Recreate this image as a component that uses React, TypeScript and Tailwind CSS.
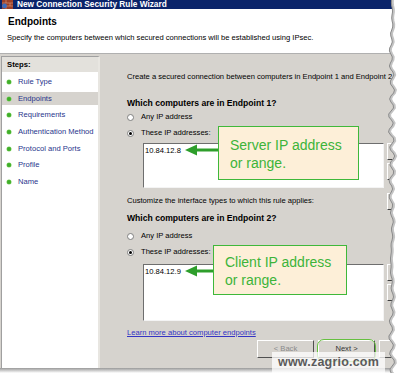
import React from "react";

function Radio({ checked }: { checked?: boolean }) {
  return (
    <span className="w-[7px] h-[7px] rounded-full border border-[#7f7f7f] bg-white shrink-0 flex items-center justify-center">
      {checked && <span className="block w-[3px] h-[3px] rounded-full bg-black" />}
    </span>
  );
}

function Bullet() {
  return (
    <span className="block w-[4px] h-[4px] rounded-full bg-[#3fae2a] shadow-[0_0_0_0.5px_#7ccf5e] shrink-0" />
  );
}

function SideButton() {
  return (
    <div className="w-[50px] h-[17px] bg-[#d6d3ce] border border-t-white border-l-white border-b-[#404040] border-r-[#404040]" />
  );
}

function TitleIcon() {
  return (
    <svg width="13" height="9" viewBox="0 0 13 9" className="shrink-0 ml-[1px]">
      <rect x="1" y="0" width="11" height="9" fill="#9c3f28" />
      <path d="M1 3h11M1 6h11M5 0v3M9 3v3M5 6v3" stroke="#d9a080" strokeWidth="0.6" />
      <circle cx="3.5" cy="6" r="2.4" fill="#3b6cc0" />
    </svg>
  );
}

function Arrow({ tipX, y, endX }: { tipX: number; y: number; endX: number }) {
  return (
    <svg className="absolute left-0 top-0 pointer-events-none" width="400" height="373">
      <line x1={tipX + 10} y1={y} x2={endX} y2={y} stroke="#2e9e2b" strokeWidth="3" />
      <polygon points={`${tipX},${y} ${tipX + 12},${y - 5.5} ${tipX + 12},${y + 5.5}`} fill="#2e9e2b" />
    </svg>
  );
}

function TornEdge() {
  const pts: string[] = [];
  for (let y = 0; y <= 375; y += 3) {
    const x = 391.5 + Math.sin(y * 1.7) * 1.4 + Math.sin(y * 0.37) * 1.1 + Math.sin(y * 0.09) * 0.8;
    pts.push(`${x.toFixed(1)},${y}`);
  }
  const d = `M${pts.join(" L")} L400,375 L400,0 Z`;
  const line = `M${pts.join(" L")}`;
  return (
    <svg className="absolute left-0 top-0 pointer-events-none" width="400" height="373">
      <path d={d} fill="#ffffff" />
      <path d={line} fill="none" stroke="#c4c4c4" strokeWidth="2.4" transform="translate(1.2,0)" />
      <path d={line} fill="none" stroke="#8a8a8a" strokeWidth="1" />
    </svg>
  );
}

export default function App() {
  const steps = [
    "Rule Type",
    "Endpoints",
    "Requirements",
    "Authentication Method",
    "Protocol and Ports",
    "Profile",
    "Name",
  ];
  return (
    <div className="relative w-[400px] h-[373px] overflow-hidden bg-white font-['Liberation_Sans',Arial,sans-serif] text-black">
      <div className="flex flex-col w-[400px] h-[368px]">
        {/* Title bar */}
        <div className="h-[9px] shrink-0 bg-[#0a246a] flex items-start overflow-hidden">
          <TitleIcon />
          <span className="ml-[3px] text-[8.3px] leading-[8px] font-bold text-white whitespace-nowrap">
            New Connection Security Rule Wizard
          </span>
        </div>
        {/* Header */}
        <div className="h-[45px] shrink-0 bg-white border-b border-[#b0b0b0] pl-[8px] pt-[7px]">
          <div className="h-[12px] leading-[12px] text-[10px] font-bold">Endpoints</div>
          <div className="mt-[5px] -ml-[1px] h-[10px] leading-[10px] text-[7.6px] whitespace-nowrap">
            Specify the computers between which secured connections will be established using IPsec.
          </div>
        </div>
        {/* Body */}
        <div className="flex-1 min-h-0 flex bg-[#d6d3ce]">
          {/* Steps panel */}
          <div className="w-[99px] ml-[1px] mt-[2px] shrink-0 bg-white border-l border-t border-[#a0a0a0] border-r-[2px] border-r-[#e8e6e1] flex flex-col">
            <div className="h-[15px] leading-[15px] bg-[#e3e1dc] pl-[5px] text-[7.7px] font-bold">Steps:</div>
            <div className="mt-[2px] flex flex-col">
              {steps.map((s) => (
                <div key={s} className="h-[16.6px] flex items-center">
                  <div
                    className={
                      s === "Endpoints"
                        ? "w-full h-[13px] flex items-center bg-[#d6d3ce]"
                        : "w-full h-[13px] flex items-center"
                    }
                  >
                    <span className="block ml-[5px]">
                      <Bullet />
                    </span>
                    <span className="ml-[7px] text-[7.6px] leading-[10px] text-[#27358c] whitespace-nowrap">{s}</span>
                  </div>
                </div>
              ))}
            </div>
          </div>
          {/* Content */}
          <div className="pl-[27px] flex flex-col text-[7.6px] whitespace-nowrap">
            <div className="mt-[18px] h-[10px] leading-[10px]">
              Create a secured connection between computers in Endpoint 1 and Endpoint 2.
            </div>
            <div className="mt-[16px] h-[11px] leading-[11px] text-[8.6px] font-bold">Which computers are in Endpoint 1?</div>
            <div className="mt-[3px] h-[10px] flex items-center">
              <Radio />
              <span className="ml-[7px] leading-[10px]">Any IP address</span>
            </div>
            <div className="mt-[6px] h-[10px] flex items-center">
              <Radio checked />
              <span className="ml-[7px] leading-[10px]">These IP addresses:</span>
            </div>
            <div className="mt-[5px] ml-[16px] flex gap-[3px]">
              <div className="w-[241px] h-[45px] bg-white border border-t-[#6e6e6e] border-l-[#6e6e6e] border-b-[#f4f4f4] border-r-[#f4f4f4] pl-[1px] pt-[1.5px] leading-[10px]">
                10.84.12.8
              </div>
              <div className="flex flex-col gap-[3px]">
                <SideButton />
                <SideButton />
              </div>
            </div>
            <div className="mt-[8px] h-[10px] flex items-center">
              <span className="leading-[10px] w-[260px]">Customize the interface types to which this rule applies:</span>
              <SideButton />
            </div>
            <div className="mt-[7px] h-[11px] leading-[11px] text-[8.6px] font-bold">Which computers are in Endpoint 2?</div>
            <div className="mt-[7px] h-[10px] flex items-center">
              <Radio />
              <span className="ml-[7px] leading-[10px]">Any IP address</span>
            </div>
            <div className="mt-[6px] h-[10px] flex items-center">
              <Radio checked />
              <span className="ml-[7px] leading-[10px]">These IP addresses:</span>
            </div>
            <div className="mt-[7px] ml-[16px] flex gap-[3px]">
              <div className="w-[241px] h-[57px] bg-white border border-t-[#6e6e6e] border-l-[#6e6e6e] border-b-[#f4f4f4] border-r-[#f4f4f4] pl-[1px] pt-[1.5px] leading-[10px]">
                10.84.12.9
              </div>
              <div className="flex flex-col gap-[3px]">
                <SideButton />
                <SideButton />
              </div>
            </div>
            <div className="mt-[7px] h-[10px] leading-[10px]">
              <span className="text-[#3434c4] underline">Learn more about computer endpoints</span>
            </div>
            <div className="mt-[2px] pl-[130px] flex gap-[4px]">
              <div className="w-[57px] h-[18px] flex items-center justify-center border border-t-white border-l-white border-b-[#505050] border-r-[#505050] text-[#8a8a8a]">
                &lt; Back
              </div>
              <div className="w-[57px] h-[18px] flex items-center justify-center border border-t-white border-l-white border-b-[#505050] border-r-[#505050] text-[#333]">
                Next &gt;
              </div>
              <div className="w-[57px] h-[18px] border border-t-white border-l-white border-b-[#505050] border-r-[#505050]" />
            </div>
          </div>
        </div>
      </div>
      {/* bottom shadow */}
      <div className="h-[5px] bg-linear-to-b from-[#9a9a9a] to-white" />

      {/* Callouts */}
      <Arrow tipX={185} y={150} endX={219} />
      <div className="absolute left-[218px] top-[126px] w-[141px] h-[54px] bg-[#fdefd8] border-[1.5px] border-[#3fb83a] pl-[11px] pt-[9px] text-[14px] leading-[18px] text-[#3cb43a] whitespace-nowrap">
        <div>Server IP address</div>
        <div>or range.</div>
      </div>
      <Arrow tipX={185} y={271} endX={214} />
      <div className="absolute left-[213px] top-[245px] w-[134px] h-[50px] bg-[#fdefd8] border-[1.5px] border-[#3fb83a] pl-[11px] pt-[7px] text-[14px] leading-[18px] text-[#3cb43a] whitespace-nowrap">
        <div>Client IP address</div>
        <div>or range.</div>
      </div>

      {/* Next highlight */}
      <div className="absolute left-[317px] top-[339px] w-[59px] h-[23px] rounded-[7px] border-[1.5px] border-[#66c040]" />

      {/* Torn edge */}
      <TornEdge />

      {/* Watermark */}
      <div className="absolute left-[272px] top-[352px] w-[113px] h-[21px] bg-white/75 flex items-center justify-center">
        <span className="text-[12.5px] font-bold text-[#5b5b5b] tracking-[0.2px]">www.zagrio.com</span>
      </div>
    </div>
  );
}
